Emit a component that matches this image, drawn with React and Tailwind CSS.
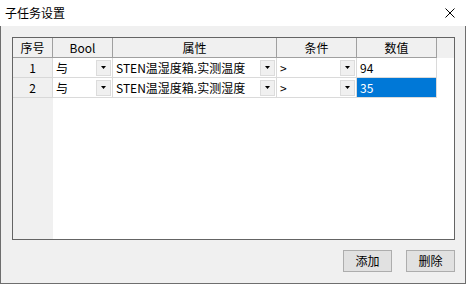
import React from "react";

function Arrow() {
  return (
    <div className="w-[15px] h-[16px] mr-px bg-[#f0f0f0] border border-[#dcdcdc] flex items-center justify-center shrink-0">
      <svg width="5" height="3" viewBox="0 0 5 3">
        <path d="M0 0H5L2.5 3Z" fill="#000" />
      </svg>
    </div>
  );
}

function HeaderCell({ w, children }) {
  return (
    <div
      className={`${w} h-full shrink-0 flex items-center justify-center bg-[#f0f0f0] border-r border-b border-[#a0a0a0]`}
    >
      {children}
    </div>
  );
}

function ComboCell({ w, text }) {
  return (
    <div className={`${w} h-full shrink-0 flex items-center border-r border-b border-[#dadada] bg-white`}>
      <div className="flex-1 pl-[3px] whitespace-nowrap leading-[16px]">{text}</div>
      <Arrow />
    </div>
  );
}

function Row({ n, prop, value, selected }) {
  return (
    <div className="flex h-[20px]">
      <div className="w-[40px] h-full shrink-0 flex items-center justify-center bg-[#f0f0f0] border-r border-b border-[#d8d8d8] leading-[16px]">
        {n}
      </div>
      <ComboCell w="w-[60px]" text="与" />
      <ComboCell w="w-[164px]" text={prop} />
      <ComboCell w="w-[80px]" text=">" />
      <div className="w-[80px] h-full shrink-0 border-r border-b border-[#dadada] bg-white">
        <div
          className={
            selected
              ? "h-[19px] bg-[#0078d7] text-white flex items-center pl-[3px] leading-[16px]"
              : "h-[19px] flex items-center pl-[3px] leading-[16px]"
          }
        >
          {value}
        </div>
      </div>
    </div>
  );
}

export default function App() {
  return (
    <div className="w-[466px] h-[284px] flex flex-col bg-[#f0f0f0] text-[12px] leading-[16px] font-normal text-black font-['Noto_Sans_CJK_SC',sans-serif]">
      <div className="h-[26px] bg-white flex items-center justify-between shrink-0">
        <span className="pl-[5px] text-[12px]">子任务设置</span>
        <svg width="10" height="10" viewBox="0 0 10 10" className="mr-[11px]">
          <path d="M0.5 0.5L9.5 9.5M9.5 0.5L0.5 9.5" stroke="#000" strokeWidth="1" />
        </svg>
      </div>
      <div className="flex-1 flex flex-col border-l border-r border-b border-[#6e6e6e] pl-[11px] pr-[10px] pt-[11px] pb-[11px]">
        <div className="h-[203px] w-[443px] border border-[#646464] flex flex-col bg-white">
          <div className="flex h-[20px] bg-[#f0f0f0] shrink-0">
            <HeaderCell w="w-[40px]">序号</HeaderCell>
            <HeaderCell w="w-[60px]">Bool</HeaderCell>
            <HeaderCell w="w-[164px]">属性</HeaderCell>
            <HeaderCell w="w-[80px]">条件</HeaderCell>
            <HeaderCell w="w-[80px]">数值</HeaderCell>
            <div className="flex-1" />
          </div>
          <Row n="1" prop="STEN温湿度箱.实测温度" value="94" />
          <Row n="2" prop="STEN温湿度箱.实测湿度" value="35" selected />
          <div className="flex-1 flex">
            <div className="w-[40px] bg-[#f0f0f0]" />
            <div className="flex-1 bg-white" />
          </div>
        </div>
        <div className="flex justify-end gap-[14px] mt-[10px]">
          <button className="w-[49px] h-[22px] bg-[#e1e1e1] border border-[#adadad] flex items-center justify-center text-[12px]">
            添加
          </button>
          <button className="w-[49px] h-[22px] bg-[#e1e1e1] border border-[#adadad] flex items-center justify-center text-[12px]">
            删除
          </button>
        </div>
      </div>
    </div>
  );
}
